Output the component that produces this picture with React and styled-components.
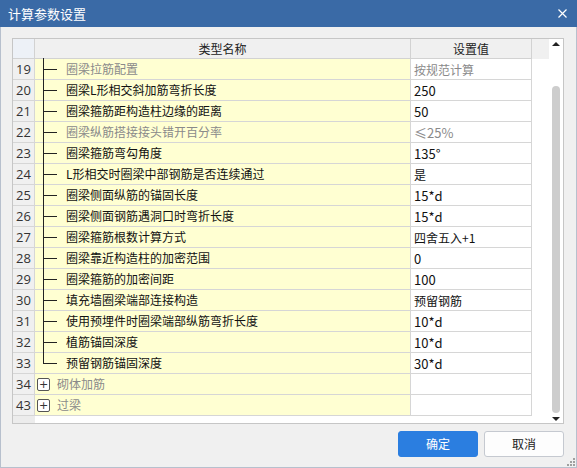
import styled, { createGlobalStyle, css } from "styled-components";

const GlobalStyle = createGlobalStyle`
  html, body {
    margin: 0;
    padding: 0;
    background: #f0f0f0;
  }
  body {
    font-family: "Noto Sans CJK SC", "Noto Sans", sans-serif;
  }
  * {
    box-sizing: border-box;
  }
`;

const rows = [
  { n: 19, name: "圈梁拉筋配置", value: "按规范计算", muted: true },
  { n: 20, name: "圈梁L形相交斜加筋弯折长度", value: "250" },
  { n: 21, name: "圈梁箍筋距构造柱边缘的距离", value: "50" },
  { n: 22, name: "圈梁纵筋搭接接头错开百分率", value: "≤25%", muted: true },
  { n: 23, name: "圈梁箍筋弯勾角度", value: "135°" },
  { n: 24, name: "L形相交时圈梁中部钢筋是否连续通过", value: "是" },
  { n: 25, name: "圈梁侧面纵筋的锚固长度", value: "15*d" },
  { n: 26, name: "圈梁侧面钢筋遇洞口时弯折长度", value: "15*d" },
  { n: 27, name: "圈梁箍筋根数计算方式", value: "四舍五入+1" },
  { n: 28, name: "圈梁靠近构造柱的加密范围", value: "0" },
  { n: 29, name: "圈梁箍筋的加密间距", value: "100" },
  { n: 30, name: "填充墙圈梁端部连接构造", value: "预留钢筋" },
  { n: 31, name: "使用预埋件时圈梁端部纵筋弯折长度", value: "10*d" },
  { n: 32, name: "植筋锚固深度", value: "10*d" },
  { n: 33, name: "预留钢筋锚固深度", value: "30*d", last: true },
  { n: 34, name: "砌体加筋", group: true },
  { n: 43, name: "过梁", group: true },
];

const Window = styled.div`
  position: relative;
  width: 577px;
  height: 468px;
  background: #f0f0f0;
  border: 1px solid #b7c0cd;
  border-top: none;
  display: flex;
  flex-direction: column;
`;

const TitleBar = styled.div`
  height: 27px;
  margin: 0 -1px;
  background: #3a6aa6;
  color: #fff;
  font-size: 13px;
  display: flex;
  align-items: center;
  justify-content: space-between;
  padding: 0 8px 1px 8px;
`;

const CloseButton = styled.svg`
  width: 9px;
  height: 9px;
  margin-right: 2px;
`;

const Body = styled.div`
  flex: 1;
  display: flex;
  flex-direction: column;
  padding: 11px 12px 0 11px;
`;

const Grid = styled.div`
  height: 386px;
  border: 1px solid #c6c6c6;
  background: #fff;
  display: flex;
`;

const TableArea = styled.div`
  flex: 1;
  display: flex;
  flex-direction: column;
`;

const columns = "22px 376px 121px 1fr";

const HeaderRow = styled.div`
  display: grid;
  grid-template-columns: ${columns};
  height: 20px;
  background: #f0f0f0;
  font-size: 12px;
  color: #222;
`;

const HeaderCell = styled.div`
  display: flex;
  align-items: center;
  justify-content: center;
  border-bottom: 1px solid #d2d2d2;
  ${(p) =>
    p.$corner &&
    css`
      background: #edf1f7;
    `}
  ${(p) =>
    !p.$filler &&
    css`
      border-right: 1px solid #d2d2d2;
    `}
  ${(p) =>
    p.$filler &&
    css`
      border-bottom: none;
    `}
`;

const Row = styled.div`
  display: grid;
  grid-template-columns: ${columns};
  height: 21px;
  font-size: 12px;
`;

const NumCell = styled.div`
  background: #f0f0f0;
  border-right: 1px solid #d6d6d6;
  border-bottom: 1px solid #d6d6d6;
  display: flex;
  align-items: center;
  justify-content: center;
  font-family: "Open Sans", "Noto Sans", sans-serif;
  font-size: 13px;
  color: #333;
`;

const NameCell = styled.div`
  background: #ffffd2;
  border-right: 1px solid #d6d6d6;
  border-bottom: 1px solid #d6d6d6;
  display: flex;
  align-items: stretch;
  color: ${(p) => (p.$muted ? "#8a8a8a" : "#111")};
  white-space: nowrap;
`;

const ValueCell = styled.div`
  border-right: 1px solid #d6d6d6;
  border-bottom: 1px solid #d6d6d6;
  display: flex;
  align-items: center;
  padding-left: 3px;
  color: ${(p) => (p.$muted ? "#8a8a8a" : "#111")};
  font-size: ${(p) => (p.$latin ? "13px" : "12px")};
`;

const Guide = styled.span`
  position: relative;
  width: 31px;
  flex-shrink: 0;
  &::before {
    content: "";
    position: absolute;
    left: 8px;
    top: -1px;
    width: 1px;
    height: ${(p) => (p.$last ? "11px" : "22px")};
    background: #222;
  }
  &::after {
    content: "";
    position: absolute;
    left: 8px;
    top: 10px;
    width: 14px;
    height: 1px;
    background: #222;
  }
`;

const Expander = styled.span`
  width: 13px;
  height: 13px;
  margin: 0 7px 0 2px;
  align-self: center;
  border: 1px solid #555;
  border-radius: 2px;
  background: #fff;
  display: flex;
  align-items: center;
  justify-content: center;
  font-family: "DejaVu Sans", sans-serif;
  font-size: 11px;
  line-height: 1;
  color: #333;
`;

const Label = styled.span`
  display: flex;
  align-items: center;
  padding-bottom: 1px;
`;

const FillerRow = styled.div`
  flex: 1;
  display: grid;
  grid-template-columns: ${columns};
`;

const FillerNum = styled.div`
  background: #ececec;
`;

const ScrollBar = styled.div`
  width: 14px;
  display: flex;
  flex-direction: column;
  align-items: center;
  padding: 3px 0 2px 0;
`;

const Arrow = styled.span`
  width: 0;
  height: 0;
  border-left: 4px solid transparent;
  border-right: 4px solid transparent;
  ${(p) =>
    p.$down
      ? css`
          border-top: 4px solid #222;
        `
      : css`
          border-bottom: 4px solid #222;
        `}
`;

const Track = styled.div`
  flex: 1;
  display: flex;
  flex-direction: column;
  padding: 40px 0 2px 0;
  margin-bottom: 2px;
`;

const Thumb = styled.div`
  flex: 1;
  width: 8px;
  border-radius: 4px;
  background: #cdcdcd;
`;

const Footer = styled.div`
  display: flex;
  justify-content: flex-end;
  gap: 6px;
  margin-top: 7px;
`;

const Button = styled.button`
  width: 80px;
  height: 26px;
  border-radius: 3px;
  font-family: "Noto Sans CJK SC", sans-serif;
  font-size: 12px;
  padding: 0 0 1px 0;
  ${(p) =>
    p.$primary
      ? css`
          background: #2b7ee0;
          border: 1px solid #2b7ee0;
          color: #fff;
        `
      : css`
          background: #fdfdfd;
          border: 1px solid #c5c9d0;
          color: #222;
        `}
`;

const Grip = styled.svg`
  position: absolute;
  right: 1px;
  bottom: 1px;
  width: 8px;
  height: 8px;
`;

function TreeName({ row }) {
  if (row.group) {
    return (
      <NameCell $muted>
        <Expander>+</Expander>
        <Label>{row.name}</Label>
      </NameCell>
    );
  }
  return (
    <NameCell $muted={row.muted}>
      <Guide $last={row.last} />
      <Label>{row.name}</Label>
    </NameCell>
  );
}

export default function App() {
  return (
    <>
      <GlobalStyle />
      <Window>
        <TitleBar>
          <span>计算参数设置</span>
          <CloseButton viewBox="0 0 9 9">
            <path d="M0.5 0.5 L8.5 8.5 M8.5 0.5 L0.5 8.5" stroke="#fff" strokeWidth="1.2" />
          </CloseButton>
        </TitleBar>
        <Body>
          <Grid>
            <TableArea>
              <HeaderRow>
                <HeaderCell $corner />
                <HeaderCell>类型名称</HeaderCell>
                <HeaderCell>设置值</HeaderCell>
                <HeaderCell $filler />
              </HeaderRow>
              {rows.map((row) => (
                <Row key={row.n}>
                  <NumCell>{row.n}</NumCell>
                  <TreeName row={row} />
                  <ValueCell $muted={row.muted} $latin={/^[\d*d°≤%]+$/.test(row.value || "")}>
                    {row.value || ""}
                  </ValueCell>
                  <div />
                </Row>
              ))}
              <FillerRow>
                <FillerNum />
              </FillerRow>
            </TableArea>
            <ScrollBar>
              <Arrow />
              <Track>
                <Thumb />
              </Track>
              <Arrow $down />
            </ScrollBar>
          </Grid>
          <Footer>
            <Button $primary>确定</Button>
            <Button>取消</Button>
          </Footer>
        </Body>
        <Grip viewBox="0 0 8 8">
          <rect x="6" y="0" width="2" height="2" fill="#a0a0a0" />
          <rect x="3" y="3" width="2" height="2" fill="#a0a0a0" />
          <rect x="6" y="3" width="2" height="2" fill="#a0a0a0" />
          <rect x="0" y="6" width="2" height="2" fill="#a0a0a0" />
          <rect x="3" y="6" width="2" height="2" fill="#a0a0a0" />
          <rect x="6" y="6" width="2" height="2" fill="#a0a0a0" />
        </Grip>
      </Window>
    </>
  );
}
